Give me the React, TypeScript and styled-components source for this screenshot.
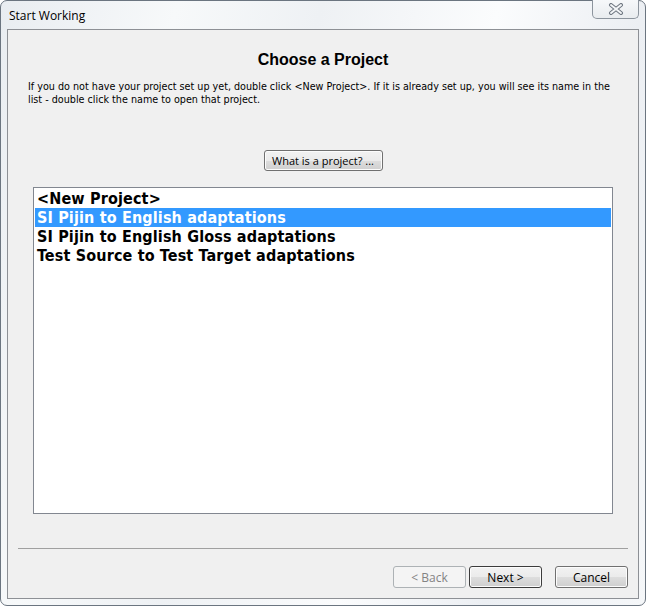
import React from "react";
import styled, { createGlobalStyle } from "styled-components";

const Global = createGlobalStyle`
  html, body { margin: 0; padding: 0; background: #ffffff; }
  body { font-family: "Liberation Sans", Arial, sans-serif; }
  * { box-sizing: border-box; }
`;

const Window = styled.div`
  width: 646px;
  height: 606px;
  border: 1px solid #6b7580;
  border-radius: 7px;
  background: linear-gradient(105deg, #e9edf1 0%, #f7f9fa 22%, #eef1f4 40%, #fbfcfd 62%, #eceff3 80%, #f5f7f9 100%);
  display: flex;
  flex-direction: column;
  padding: 0 6px 6px 6px;
`;

const TitleBar = styled.div`
  height: 28px;
  display: flex;
  align-items: flex-start;
  justify-content: space-between;
`;

const TitleText = styled.div`
  font-family: "Open Sans", "Liberation Sans", sans-serif;
  font-size: 12px;
  color: #000;
  margin-top: 6px;
  margin-left: 2px;
`;

const CloseButton = styled.div`
  width: 47px;
  height: 19px;
  margin-top: -1px;
  border: 1px solid #8c949d;
  border-top: none;
  border-radius: 0 0 5px 5px;
  background: linear-gradient(#f6f8fa, #e9ecef);
  display: flex;
  align-items: center;
  justify-content: center;
`;

const Client = styled.div`
  flex: 1;
  border: 1px solid #8d9095;
  background: #f0f0f0;
  display: flex;
  flex-direction: column;
`;

const Heading = styled.h1`
  margin: 20px 0 0 0;
  font-family: "Liberation Sans", Arial, sans-serif;
  font-weight: bold;
  font-size: 16px;
  line-height: 20px;
  text-align: center;
  color: #000;
`;

const Description = styled.p`
  margin: 10px 0 0 20px;
  font-family: "DejaVu Sans Condensed", "DejaVu Sans", sans-serif;
  font-size: 10.7px;
  line-height: 13px;
  color: #000;
  white-space: nowrap;
`;

const HelpButton = styled.button`
  align-self: center;
  margin-top: 44px;
  width: 119px;
  height: 21px;
  padding: 0;
  border: 1px solid #707070;
  border-radius: 3px;
  background: linear-gradient(#f2f2f2 0%, #ebebeb 50%, #dddddd 51%, #cfcfcf 100%);
  font-family: "Open Sans", "Liberation Sans", sans-serif;
  font-size: 11px;
  color: #000;
  box-shadow: inset 0 0 0 1px #fcfcfc;
`;

const ListBox = styled.div`
  margin: 16px 25px 0 25px;
  height: 327px;
  border: 1px solid #828790;
  background: #ffffff;
  padding: 1px;
  display: flex;
  flex-direction: column;
`;

const ListRow = styled.div<{ $selected?: boolean }>`
  height: 19px;
  padding-left: 2px;
  font-family: "DejaVu Sans Condensed", "DejaVu Sans", sans-serif;
  font-weight: bold;
  font-size: 16px;
  letter-spacing: 0.15px;
  line-height: 20px;
  white-space: nowrap;
  overflow: hidden;
  color: ${(p) => (p.$selected ? "#ffffff" : "#000000")};
  background: ${(p) => (p.$selected ? "#3399ff" : "transparent")};
`;

const Separator = styled.div`
  margin: 34px 10px 0 10px;
  height: 1px;
  background: #a0a0a0;
`;

const ButtonRow = styled.div`
  margin-top: 17px;
  padding-right: 10px;
  display: flex;
  justify-content: flex-end;
`;

const NavButton = styled.button<{ $gap?: number; $default?: boolean }>`
  width: 73px;
  height: 22px;
  margin-left: ${(p) => p.$gap ?? 0}px;
  padding: 0;
  border: 1px solid ${(p) => (p.$default ? "#3c3c3c" : "#707070")};
  border-radius: 3px;
  background: linear-gradient(#f2f2f2 0%, #ebebeb 50%, #dddddd 51%, #cfcfcf 100%);
  box-shadow: inset 0 0 0 1px #fcfcfc;
  font-family: "Open Sans", "Liberation Sans", sans-serif;
  font-size: 12px;
  color: #000;

  &:disabled {
    border-color: #adb2b5;
    background: #f4f4f4;
    color: #838383;
    box-shadow: none;
  }
`;

const projects = [
  "<New Project>",
  "SI Pijin to English adaptations",
  "SI Pijin to English Gloss adaptations",
  "Test Source to Test Target adaptations",
];

export default function App() {
  return (
    <>
      <Global />
      <Window>
        <TitleBar>
          <TitleText>Start Working</TitleText>
          <CloseButton>
            <svg width="16" height="12" viewBox="0 0 16 12">
              <path d="M3 2 L13 10 M13 2 L3 10" stroke="#6e7680" strokeWidth="4" strokeLinecap="round" />
              <path d="M3 2 L13 10 M13 2 L3 10" stroke="#f4f6f8" strokeWidth="2" strokeLinecap="round" />
            </svg>
          </CloseButton>
        </TitleBar>
        <Client>
          <Heading>Choose a Project</Heading>
          <Description>
            If you do not have your project set up yet, double click &lt;New Project&gt;. If it is already set up, you will see its name in the
            <br />
            list - double click the name to open that project.
          </Description>
          <HelpButton>What is a project? ...</HelpButton>
          <ListBox>
            {projects.map((p, i) => (
              <ListRow key={p} $selected={i === 1}>
                {p}
              </ListRow>
            ))}
          </ListBox>
          <Separator />
          <ButtonRow>
            <NavButton disabled>&lt; Back</NavButton>
            <NavButton $gap={3} $default>
              Next &gt;
            </NavButton>
            <NavButton $gap={13}>Cancel</NavButton>
          </ButtonRow>
        </Client>
      </Window>
    </>
  );
}
